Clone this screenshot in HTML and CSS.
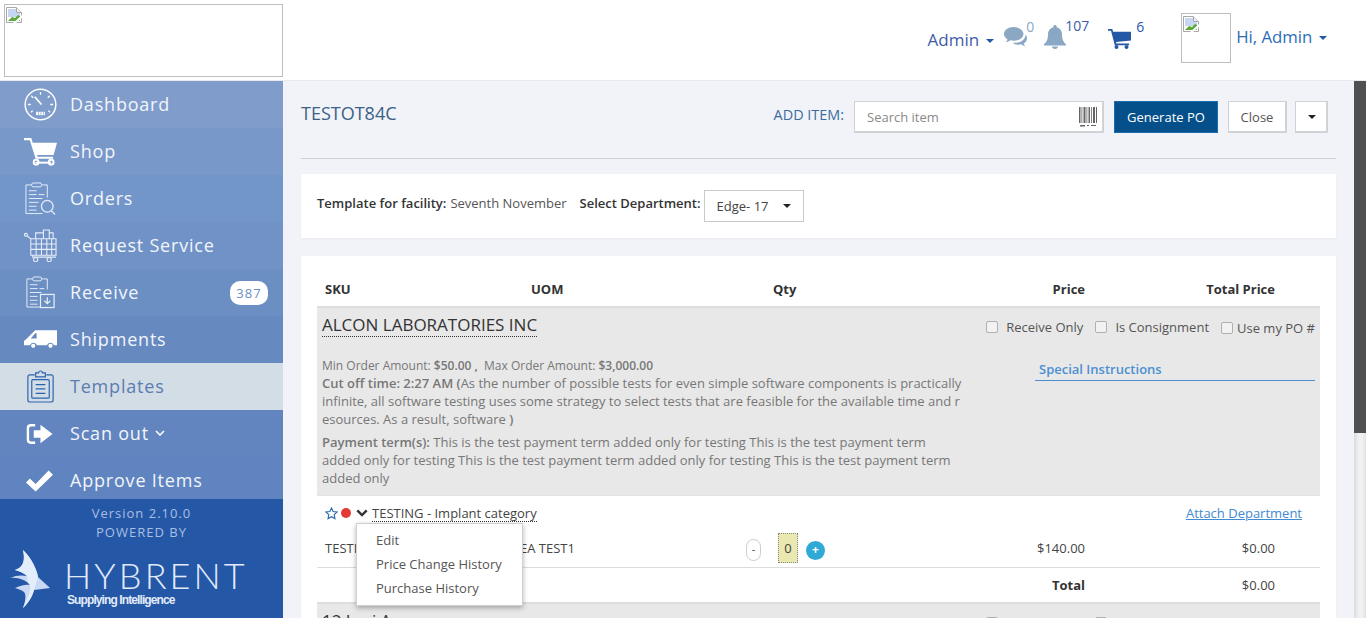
FILE: index.html
```html
<!DOCTYPE html>
<html lang="en">
<head>
<meta charset="utf-8">
<title>TESTOT84C</title>
<link rel="stylesheet" href="styles.css">
</head>
<body>
<svg class="defs" width="0" height="0" aria-hidden="true">
  <symbol id="broken" viewBox="0 0 16 16">
    <path d="M.5.5h10l5 5v10H.5z" fill="#fff" stroke="#a8a8a8"/>
    <path d="M2 2h8v4h4v4H2z" fill="#c7d6f3"/>
    <path d="M2 14l4-4 3 1 3-3 2 1v5z" fill="#5da83a"/>
    <path d="M10.500.5v5h5" fill="#eee" stroke="#a8a8a8"/>
    <path d="M16 8L7 16h3l6-5z" fill="#fff"/>
  </symbol>
</svg>
<div class="app">
  <header class="topbar">
    <div class="logo-box"><svg class="broken"><use href="#broken"/></svg></div>
    <div class="top-nav">
      <span class="admin">Admin<i class="caret"></i></span>
      <svg class="ic-comments" viewBox="0 0 23.500 20.500"><path fill="#8aa8c3" d="M10 1C4.700 1 .5 4 .5 7.800c0 2.200 1.400 4 3.500 5.300-.3 1.100-1 2-1.800 2.800 1.700-.2 3.300-.9 4.600-1.900 1.100.3 2.200.4 3.200.4 5.300 0 9.500-3 9.500-6.600S15.300 1 10 1z"/><path fill="#8aa8c3" d="M21.500 8.300c.3 4.300-4.300 8-10.500 8.100-.8 0-1.500 0-2.200-.1 1.500 1.300 3.600 2 5.900 2 .9 0 1.800-.1 2.600-.4 1.100.9 2.400 1.500 4 1.800-.6-.8-1.200-1.700-1.500-2.700 1.900-1 3.200-2.800 3.200-4.700 0-1.600-.6-3-1.500-4z"/></svg>
      <span class="count count-chat">0</span>
      <svg class="ic-bell" viewBox="0 0 22 24"><path fill="#8aa8c3" d="M11 0c-1 0-1.700.7-1.700 1.600v.6C5.900 3 4 6 4 9.500c0 5-1.500 7.500-4 9.800v1.200h22v-1.200c-2.500-2.300-4-4.800-4-9.800 0-3.500-1.900-6.500-5.300-7.300v-.6C12.700.7 12 0 11 0zM8 21.500c0 1.500 1.300 2.500 3 2.500s3-1 3-2.500z"/></svg>
      <span class="count count-bell">107</span>
      <svg class="ic-cart" viewBox="0 0 23 20"><path fill="#2557a7" d="M0 0h4.300l.8 2.800H23v8.700l-15 1.500.4 1.500H21v1.700H6.800L3 1.700H0z"/><circle fill="#2557a7" cx="8.500" cy="18" r="2"/><circle fill="#2557a7" cx="18.500" cy="18" r="2"/></svg>
      <span class="count count-cart">6</span>
      <div class="avatar"><svg class="broken"><use href="#broken"/></svg></div>
      <span class="hi">Hi, Admin<i class="caret"></i></span>
    </div>
  </header>
  <div class="body-row">
    <aside class="sidebar">
      <nav class="menu">
        <a class="menu-item"><svg class="mi" viewBox="0 0 34 34" fill="none" stroke="#fff"><circle cx="17" cy="17" r="15.800" stroke-width="1.500"/><path d="M17 4v3M7.500 8l2 2M26.500 8l-2 2M4 17h3M30 17h-3M7 25l2-1.500M27 25l-2-1.500" stroke-width="1.300"/><path d="M11 9l7 8" stroke-width="1.800"/><path d="M12.500 24.500h9v3.500h-9z" fill="#fff" stroke="none"/><path d="M15 24v4.500M17.500 24v4.500M20 24v4.500" stroke="#7f9dcb" stroke-width=".7"/></svg><span>Dashboard</span></a>
        <a class="menu-item"><svg class="mi" viewBox="0 0 34 28"><path fill="#fff" d="M0 0h7.500l1.500 5h25l-3.500 12.500H13.500l.5 2H30v2H12L6 2.500H0z"/><path fill="none" stroke="#fff" stroke-width="2" d="M12 25.500h16"/><circle cx="12.500" cy="25" r="2.500" fill="none" stroke="#fff" stroke-width="2"/><circle cx="28" cy="25" r="2.500" fill="none" stroke="#fff" stroke-width="2"/></svg><span>Shop</span></a>
        <a class="menu-item"><svg class="mi" viewBox="0 0 34 34" fill="none" stroke="#e6edf8" stroke-width="1"><path d="M8 3H2v29.500h17M24 16V3h-6"/><rect x="8" y="1" width="10" height="4" rx="1.500"/><path d="M5 9h8M5 13h8M15 13h6M5 17h14M5 21h10M5 25h8M5 29h8"/><circle cx="24" cy="25" r="6" stroke-width="1.300"/><path d="M28 29.500l4 4" stroke-width="1.300"/></svg><span>Orders</span></a>
        <a class="menu-item"><svg class="mi" viewBox="0 0 34 34" fill="none" stroke="#e6edf8" stroke-width="1.100"><circle cx="2" cy="6" r="1.500"/><path d="M3 7l4 3v17h26V10H7M12 10V4h8v6M20 7V1h6v9M26 4h4v6M12.500 10v17M18 10v17M23.500 10v17M28.500 10v17M7 15.500h26M7 21h26M9 27v2h24"/><circle cx="12" cy="31.500" r="2.200"/><circle cx="26" cy="31.500" r="2.200"/></svg><span>Request Service</span></a>
        <a class="menu-item"><svg class="mi" viewBox="0 0 34 34" fill="none" stroke="#e6edf8" stroke-width="1"><path d="M9 3H3v29h14M24 14V3h-6"/><rect x="9" y="1" width="9" height="4" rx="1.500"/><path d="M6 9h8M6 13h8M16 13h5M6 17h12M6 21h8M6 25h8M6 29h8"/><rect x="17" y="19" width="14" height="13.500" stroke-width="1.300"/><path d="M24 22v6M21 25.500l3 3 3-3" stroke-width="1.300"/></svg><span>Receive</span><b class="pill">387</b></a>
        <a class="menu-item"><svg class="mi" viewBox="0 0 34 19"><path fill="#fff" d="M11.500 0H34v15.500h-3a4 4 0 0 0-7.500 0h-10a4 4 0 0 0-7.500 0H0V11l3-2.500z"/><path fill="#6689c0" d="M11.500 3L7 8.500h6V3z"/><circle cx="9.500" cy="16" r="2.200" fill="#fff"/><circle cx="27.300" cy="16" r="2.200" fill="#fff"/></svg><span>Shipments</span></a>
        <a class="menu-item active"><svg class="mi" viewBox="0 0 34 34" fill="none" stroke="#2b62ad" stroke-width="1.200"><path d="M11 5H6a2 2 0 0 0-2 2v24a2 2 0 0 0 2 2h22a2 2 0 0 0 2-2V7a2 2 0 0 0-2-2h-5"/><path d="M12 7V3h3a2 2 0 0 1 4 0h3v4z"/><rect x="8" y="10" width="18" height="19" rx="1"/><path d="M12 15h10M12 19.500h10M12 24h10"/></svg><span>Templates</span></a>
        <a class="menu-item"><svg class="mi mi-sm" viewBox="0 0 28 22"><path fill="none" stroke="#fff" stroke-width="2.500" d="M9.500 2H5a3 3 0 0 0-3 3v12a3 3 0 0 0 3 3h4.500"/><path fill="#fff" d="M8 7h7V1.500L27.500 11 15 20.500V15H8z"/></svg><span>Scan out<svg class="chev" viewBox="0 0 10 6"><path d="M1 1l4 4 4-4" fill="none" stroke="#fff" stroke-width="1.600"/></svg></span></a>
        <a class="menu-item"><svg class="mi mi-sm" viewBox="0 0 28 22"><path fill="#fff" d="M0 12.500L4 8.500l6 5.500L23.500 0 28 4.500 10 22z"/></svg><span>Approve Items</span></a>
      </nav>
      <div class="side-foot">
        <div class="ver">Version 2.10.0</div>
        <div class="powered">POWERED BY</div>
        <div class="brand">
          <svg class="bird" viewBox="0 0 40 58"><path fill="#c9d9f4" d="M13 0C21 7 27 20 28 27L40 38 24 40C22 48 17 54 13 58 16 50 16 44 14 42 12 40 8 39 5 38 10 36 15 34 20 35 16 30 8 27 0 28 6 25 12 25 17 26 14 23 9 21 5 20 11 18 16 14 13 0z"/><path fill="#e4edfb" d="M13 0C21 7 27 20 28 27L24 40C22 48 17 54 13 58 16 50 22 40 20 35 16 30 18 27 17 26 14 23 9 21 5 20 11 18 16 14 13 0z"/></svg>
          <div class="brand-text">
            <div class="brand-name">HYBRENT</div>
            <div class="brand-tag">Supplying Intelligence</div>
          </div>
        </div>
      </div>
    </aside>
    <main class="main">
      <div class="title-row">
        <h1 class="title">TESTOT84C</h1>
        <div class="actions">
          <label class="add-label">ADD ITEM:</label>
          <div class="search"><span>Search item</span>
            <svg class="barcode" viewBox="0 0 18 20"><path fill="#666" d="M0 0h1.500v16H0zM2.500 0h.8v16h-.8zM4.500 0h2v16h-2zM7.500 0h.8v16h-.8zM9.500 0h1.500v16H9.500zM12 0h.8v16H12zM14 0h2v16h-2zM17 0h1v16h-1zM1 18h5v1.500H1zM8 18h2v1h-2zM12 18h5v1h-5z"/></svg>
          </div>
          <button class="btn primary">Generate PO</button>
          <button class="btn close">Close</button>
          <button class="btn caret-btn"><i class="caret dark"></i></button>
        </div>
      </div>
      <hr class="rule">
      <section class="panel facility">
        <span class="fac-label">Template for facility:</span>
        <span class="fac-val">Seventh November</span>
        <span class="fac-label dept">Select Department:</span>
        <div class="dept-select">Edge- 17<i class="caret dark"></i></div>
      </section>
      <section class="panel table-panel">
        <div class="grid head">
          <div class="c-sku">SKU</div><div>UOM</div><div>Qty</div><div class="r">Price</div><div class="r">Total Price</div>
        </div>
        <div class="vendor">
          <div class="vendor-top">
            <span class="vendor-name">ALCON LABORATORIES INC</span>
            <div class="checks">
              <label class="chk"><i class="box"></i>Receive Only</label>
              <label class="chk"><i class="box"></i>Is Consignment</label>
              <label class="chk last"><i class="box"></i>Use my PO #</label>
            </div>
          </div>
          <div class="vendor-info">
            <div class="notes">
              <p class="small">Min Order Amount: <b>$50.00 ,</b>&nbsp; Max Order Amount: <b>$3,000.00</b></p>
              <p><b>Cut off time: 2:27 AM (</b>As the number of possible tests for even simple software components is practically<br>infinite, all software testing uses some strategy to select tests that are feasible for the available time and r<br>esources. As a result, software <b>)</b></p>
              <p class="terms"><b>Payment term(s):</b> This is the test payment term added only for testing This is the test payment term<br>added only for testing This is the test payment term added only for testing This is the test payment term<br>added only</p>
            </div>
            <div class="special"><span>Special Instructions</span></div>
          </div>
        </div>
        <div class="item-group">
          <div class="cat-row">
            <svg class="star" viewBox="0 0 14 14"><path d="M7 1l1.800 3.900 4.200.5-3.100 2.900.8 4.200L7 10.400 3.300 12.500l.8-4.200L1 5.400l4.200-.5z" fill="none" stroke="#2b6cb0" stroke-width="1.200"/></svg>
            <i class="dot"></i>
            <svg class="cat-chev" viewBox="0 0 12 8"><path d="M1.300 1.300L6 6l4.700-4.700" fill="none" stroke="#333" stroke-width="2.400"/></svg>
            <span class="cat-name">TESTING - Implant category</span>
            <a class="attach">Attach Department</a>
          </div>
          <div class="grid item">
            <div class="c-sku">TESTING</div>
            <div class="uom">EA TEST1</div>
            <div class="qty"><i class="minus">-</i><i class="qty-val">0</i><i class="plus">+</i></div>
            <div class="r">$140.00</div>
            <div class="r">$0.00</div>
          </div>
          <div class="grid total">
            <div></div><div></div><div></div><div class="r"><b>Total</b></div><div class="r">$0.00</div>
          </div>
          <ul class="drop">
            <li>Edit</li>
            <li>Price Change History</li>
            <li>Purchase History</li>
          </ul>
        </div>
        <div class="vendor next">
          <div class="vendor-top">
            <span class="vendor-name">12 Lori A</span>
            <div class="checks">
              <label class="chk"><i class="box"></i>Receive Only</label>
              <label class="chk"><i class="box"></i>Is Consignment</label>
              <label class="chk last"><i class="box"></i>Use my PO #</label>
            </div>
          </div>
        </div>
      </section>
    </main>
    <div class="scrollbar"><div class="thumb"></div></div>
  </div>
</div>
</body>
</html>
```
FILE: styles.css
```css
* { box-sizing: border-box; }
html, body { margin: 0; height: 100%; overflow: hidden; }
body { font-family: "Open Sans", sans-serif; font-size: 13px; color: #333; background: #f1f3f8; }
.defs { position: absolute; }
i { font-style: normal; }
p { margin: 0; }
.app { height: 618px; display: flex; flex-direction: column; overflow: hidden; }

/* top bar */
.topbar { height: 81px; flex: none; background: #fff; border-bottom: 1px solid #e7e9ee; display: flex; justify-content: space-between; padding: 4px 39px 0 4px; }
.logo-box { width: 279px; height: 73px; border: 1px solid #bdbdbd; padding: 2px 1px; }
.broken { display: block; width: 16px; height: 16px; }
.top-nav { display: flex; align-items: flex-start; }
.admin { color: #3f5ca6; font-size: 17px; margin: 25px 9px 0 0; line-height: 22px; }
.hi { color: #2b6cb8; font-size: 16.800px; line-height: 22px; margin: 22px 0 0 5px; }
.caret { display: inline-block; width: 0; height: 0; border: 4px solid transparent; border-top: 4px solid #2557a7; border-bottom: 0; margin-left: 6.600px; vertical-align: 3px; }
.admin .caret { margin-left: 7px; }
.caret.dark { border-top-color: #222; }
.ic-comments { width: 25px; height: 21px; margin-top: 22px; flex: none; }
.ic-bell { width: 22px; height: 24px; margin: 21px 0 0 10px; flex: none; }
.ic-cart { width: 23px; height: 20px; margin: 25px 0 0 19px; flex: none; }
.count { font-size: 14px; line-height: 18px; margin-top: 14px; }
.count-chat { color: #8aa8c3; margin-left: -2px; width: 8px; }
.count-bell { color: #3f5ca6; margin: 13px 0 0 -1px; width: 24px; }
.count-cart { color: #2557a7; margin: 14px 0 0 5px; width: 8px; }
.avatar { width: 50px; height: 50px; border: 1px solid #bdbdbd; margin: 9px 0 0 37px; padding: 2px 1px; }

.body-row { flex: 1; min-height: 0; display: flex; }

/* sidebar */
.sidebar { width: 283px; flex: none; display: flex; flex-direction: column; background: #2557a7; }
.menu { height: 418px; overflow: hidden; flex: none; }
.menu-item { height: 47px; display: flex; align-items: center; color: #f2f5fb; font-size: 18px; letter-spacing: .8px; position: relative; }
.menu-item span { position: relative; top: -1px; display: inline-flex; align-items: center; }
.menu-item:nth-child(1) { background: #7f9ccb; }
.menu-item:nth-child(2) { background: #7898c9; }
.menu-item:nth-child(3) { background: #7396ca; }
.menu-item:nth-child(4) { background: #7092c7; }
.menu-item:nth-child(5) { background: #6b8ec3; }
.menu-item:nth-child(6) { background: #6689c0; }
.menu-item:nth-child(8) { background: #6285bf; }
.menu-item:nth-child(9) { background: #5f84bf; }
.menu-item.active { background: #d3dde6; color: #5a7cb0; }
.mi { width: 33px; height: 33px; margin: 0 13px 0 24px; flex: none; }
.mi.mi-sm { width: 27px; height: 22px; margin: 0 17px 0 26px; }
.chev { width: 10px; height: 6px; margin-left: 6px; }
.pill { position: absolute; right: 15px; top: 12px; width: 38px; height: 24px; border-radius: 10px; background: #fff; color: #6b8ec3; font-size: 13px; font-weight: 400; text-align: center; line-height: 24px; letter-spacing: 1px; }
.side-foot { flex: 1; text-align: center; color: #a9bfe2; font-size: 13px; letter-spacing: 1px; padding-top: 5px; }
.ver, .powered { line-height: 18px; }
.powered { margin-top: 1px; }
.brand { display: flex; text-align: left; padding: 9px 0 0 10px; color: #e2ebfa; letter-spacing: 0; }
.bird { width: 40px; height: 58px; flex: none; }
.brand-text { margin: 11px 0 0 14px; }
.brand-name { font-family: Lato, sans-serif; font-weight: 300; font-size: 36px; line-height: 28px; letter-spacing: 3.100px; }
.brand-tag { font-family: "Liberation Sans", sans-serif; font-size: 12px; line-height: 12px; font-weight: 700; letter-spacing: -.9px; margin: 5px 0 0 3px; }

/* main */
.main { flex: 1; min-width: 0; padding: 0 18px; overflow: hidden; }
.title-row { display: flex; justify-content: space-between; padding: 20px 8px 0 0; height: 77px; }
.title { margin: 0; font-size: 18px; font-weight: 400; color: #3a6186; line-height: 24px; }
.actions { display: flex; height: 32px; }
.add-label { color: #3a6d9e; font-size: 14.400px; line-height: 28px; margin-right: 10px; }
.search { width: 250px; border: 2px solid #d0d2d6; border-width: 1px 2px 2px 1px; background: #fff; display: flex; justify-content: space-between; align-items: center; padding: 0 5px 0 12px; color: #8a8a8a; margin-right: 10px; }
.barcode { width: 18px; height: 20px; }
.btn { font: inherit; height: 32px; padding: 0 12px; background: #fff; border: 2px solid #d0d2d6; border-width: 1px 2px 2px 1px; color: #555; margin-right: 8px; }
.btn.primary { background: #05508a; border: 1px solid #1b6bb0; color: #fff; width: 104px; margin-right: 10px; padding: 0; }
.btn.close { width: 59px; padding: 0; }
.caret-btn { width: 33px; padding: 0; margin-right: 0; }
.caret-btn .caret { margin: 0; display: block; margin-left: 12px; }
.rule { border: 0; border-top: 1px solid #cdd0d5; margin: 0 0 15px; }
.panel { background: #fff; box-shadow: 0 1px 2px rgba(0,0,0,.04); }
.facility { height: 64px; display: flex; align-items: flex-start; padding: 20px 16px 0; }
.fac-label { font-weight: 600; color: #333; line-height: 18px; }
.fac-val { color: #555; margin-left: 4px; line-height: 18px; }
.dept { margin-left: 13px; }
.dept-select { width: 100px; height: 32px; margin: -4px 0 0 3px; border: 1px solid #c8cacd; padding: 0 12px; line-height: 30px; color: #444; display: flex; justify-content: space-between; align-items: center; }
.dept-select .caret { margin-left: 0; vertical-align: 0; margin-right: 0; }
.table-panel { margin-top: 18px; padding: 0 16px; height: 400px; }

.grid { display: grid; grid-template-columns: 214px 242px 200px 112px 190px 45px; }
.r { text-align: right; white-space: nowrap; }
.c-sku { padding-left: 8px; white-space: nowrap; overflow: hidden; }
.head { height: 52px; padding-top: 24px; font-weight: 700; line-height: 18px; color: #333; border-bottom: 2px solid #dedede; }

.vendor { background: #e8e8e8; height: 188px; padding: 0 5px; color: #777; border-bottom: 1px solid #e2e2e2; }
.vendor-top { display: flex; justify-content: space-between; height: 46px; padding-top: 6px; }
.vendor-name { font-size: 17px; color: #333; line-height: 21px; height: 23px; border-bottom: 1px dotted #333; }
.checks { display: flex; padding: 5px 0 0; }
.chk { display: flex; align-items: center; height: 16px; color: #555; font-size: 13px; margin-left: 12px; }
.box { width: 12px; height: 12px; border: 1px solid #b0b0b0; border-radius: 2px; background: #f2f2f2; margin-right: 8px; }
.chk.last .box { margin-right: 4px; }
.chk.last { padding-top: 2px; }
.vendor-info { display: flex; justify-content: space-between; }
.notes { line-height: 18px; white-space: nowrap; padding-top: 3px; }
.notes b { font-weight: 600; }
.small { font-size: 12px; line-height: 17px; }
.terms { margin-top: 5px; }
.special { width: 280px; margin: 6px 0 0; height: 21px; border-bottom: 1px solid #4a90d0; color: #4a90d0; font-weight: 600; padding-left: 4px; line-height: 18px; }

.item-group { position: relative; }
.cat-row { height: 36px; display: flex; align-items: center; padding: 0 18px 2px 8px; }
.star { width: 13px; height: 13px; }
.dot { width: 10px; height: 10px; border-radius: 50%; background: #e53935; margin-left: 3px; }
.cat-chev { width: 12px; height: 8px; margin: 0 4px 0 5px; }
.cat-name { color: #444; border-bottom: 1px dotted #333; line-height: 16px; }
.attach { margin-left: auto; color: #3f8ad0; text-decoration: underline; }
.item { height: 36px; border-bottom: 1px solid #dcdcdc; align-items: center; color: #444; padding-bottom: 9px; }
.uom { margin-left: -11px; }
.qty { display: flex; align-items: flex-start; margin-left: -27px; margin-top: 1px; height: 30px; align-self: start; }
.minus { width: 15px; height: 22px; border: 1px solid #ccc; border-radius: 8px; text-align: center; font-size: 11px; line-height: 18px; background: #fff; margin-top: 6px; }
.qty-val { width: 20px; height: 30px; background: #e8e8b0; border: 1px dotted #888; margin-left: 17px; text-align: center; line-height: 28px; }
.plus { width: 19px; height: 19px; border-radius: 50%; background: #2fa9d6; color: #fff; margin: 8px 0 0 8px; text-align: center; line-height: 17px; font-weight: 700; font-size: 12px; }
.total { height: 36px; align-items: center; color: #444; border-bottom: 2px solid #dedede; }
.total b { font-weight: 700; color: #333; }
.drop { position: absolute; left: 39px; top: 27px; width: 167px; height: 83px; margin: 0; padding: 4px 0 0 19px; list-style: none; background: #fff; border: 1px solid #d0d0d0; box-shadow: 0 2px 5px rgba(0,0,0,.3); color: #555; }
.drop li { line-height: 24px; }
.next { height: 60px; }

/* scrollbar */
.scrollbar { width: 12px; flex: none; background: linear-gradient(to right, #dcdcdc, #f1f1f1 40%, #f1f1f1 70%, #e0e0e0); }
.thumb { height: 352px; background: #505050; }
```
